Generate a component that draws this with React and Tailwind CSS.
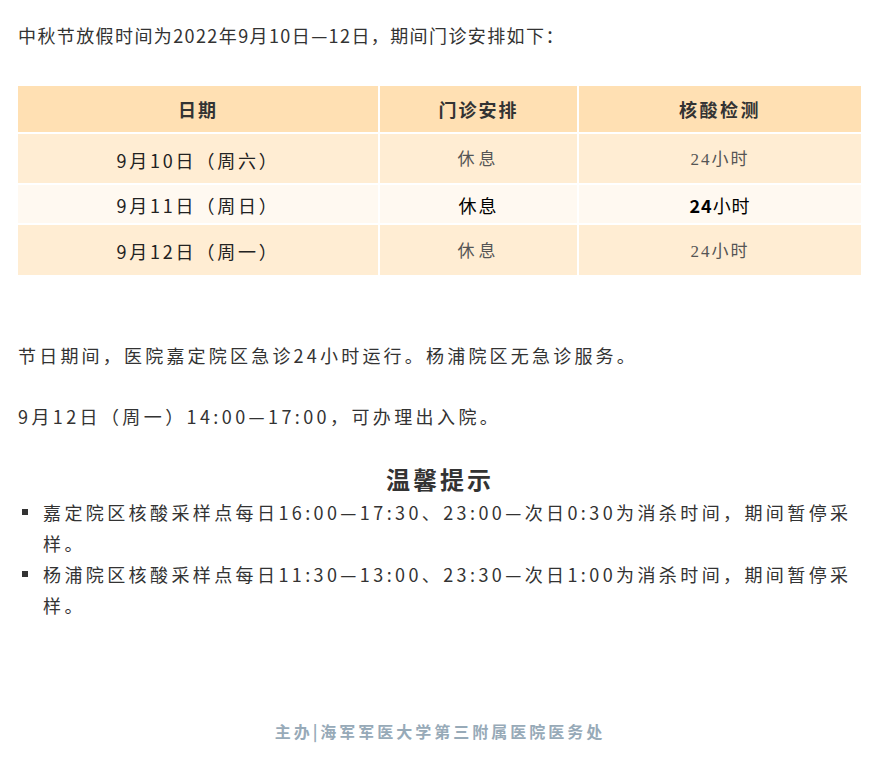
const rows = [
  { date: "9月10日（周六）", a: "休息", b: "24小时", soft: true, h: "h-[49px]" },
  { date: "9月11日（周日）", a: "休息", b: "24小时", soft: false, h: "h-[38px]" },
  { date: "9月12日（周一）", a: "休息", b: "24小时", soft: true, h: "h-[50px]" },
];

const tips = [
  "嘉定院区核酸采样点每日16:00—17:30、23:00—次日0:30为消杀时间，期间暂停采样。",
  "杨浦院区核酸采样点每日11:30—13:00、23:30—次日1:00为消杀时间，期间暂停采样。",
];

export default function App() {
  return (
    <div className="w-[880px] min-h-[782px] bg-white px-[18px] pt-[22px] text-[#333] font-['Noto_Sans_CJK_SC',sans-serif]">
      <p className="text-[18px] leading-[26px] tracking-[1.4px]">
        中秋节放假时间为2022年9月10日—12日，期间门诊安排如下：
      </p>

      <div className="mt-[38px] grid grid-cols-[360px_197px_282px] gap-[2px] w-[843px]">
        <div className="h-[46px] bg-[#ffe0b3] flex items-center justify-center text-[18px] font-bold tracking-[2px]">日期</div>
        <div className="h-[46px] bg-[#ffe0b3] flex items-center justify-center text-[18px] font-bold tracking-[2px]">门诊安排</div>
        <div className="h-[46px] bg-[#ffe0b3] flex items-center justify-center text-[18px] font-bold tracking-[2.5px]">核酸检测</div>
        {rows.map((r) => (
          <div key={r.date} className="contents">
            <div className={`${r.h} ${r.soft ? "bg-[#ffedd3]" : "bg-[#fff9f1]"} flex items-center justify-center pt-[3px] text-[18px] tracking-[2.8px] text-[#222]`}>
              {r.date}
            </div>
            {r.soft ? (
              <>
                <div className="bg-[#ffedd3] flex items-center justify-center pt-[3px] text-[17px] tracking-[4px] text-[#555] font-['Liberation_Serif','Noto_Sans_CJK_SC',serif]">
                  {r.a}
                </div>
                <div className="bg-[#ffedd3] flex items-center justify-center pt-[3px] text-[17px] tracking-[2px] text-[#555] font-['Liberation_Serif','Noto_Sans_CJK_SC',serif]">
                  {r.b}
                </div>
              </>
            ) : (
              <>
                <div className="bg-[#fff9f1] flex items-center justify-center pt-[3px] text-[18px] tracking-[2px] text-black">{r.a}</div>
                <div className="bg-[#fff9f1] flex items-center justify-center pt-[3px] text-[18px] tracking-[1px] text-black">
                  <span className="font-bold">24</span>小时
                </div>
              </>
            )}
          </div>
        ))}
      </div>

      <p className="mt-[67px] text-[18px] leading-[26px] tracking-[3.2px]">
        节日期间，医院嘉定院区急诊24小时运行。杨浦院区无急诊服务。
      </p>
      <p className="mt-[35px] text-[18px] leading-[26px] tracking-[3.4px]">
        9月12日（周一）14:00—17:00，可办理出入院。
      </p>

      <h2 className="mt-[34px] text-center text-[24px] leading-[32px] font-bold tracking-[3px]">温馨提示</h2>

      <ul className="mt-[2px]">
        {tips.map((t) => (
          <li key={t} className="flex text-[18px] leading-[31px] tracking-[3.4px]">
            <span className="w-[25px] shrink-0 pt-[12px] pl-[4px]">
              <span className="block w-[6px] h-[6px] bg-[#333]" />
            </span>
            <span>{t}</span>
          </li>
        ))}
      </ul>

      <p className="mt-[98px] text-center text-[16px] font-bold tracking-[3px] text-[#97aab8]">
        主办|海军军医大学第三附属医院医务处
      </p>
    </div>
  );
}
